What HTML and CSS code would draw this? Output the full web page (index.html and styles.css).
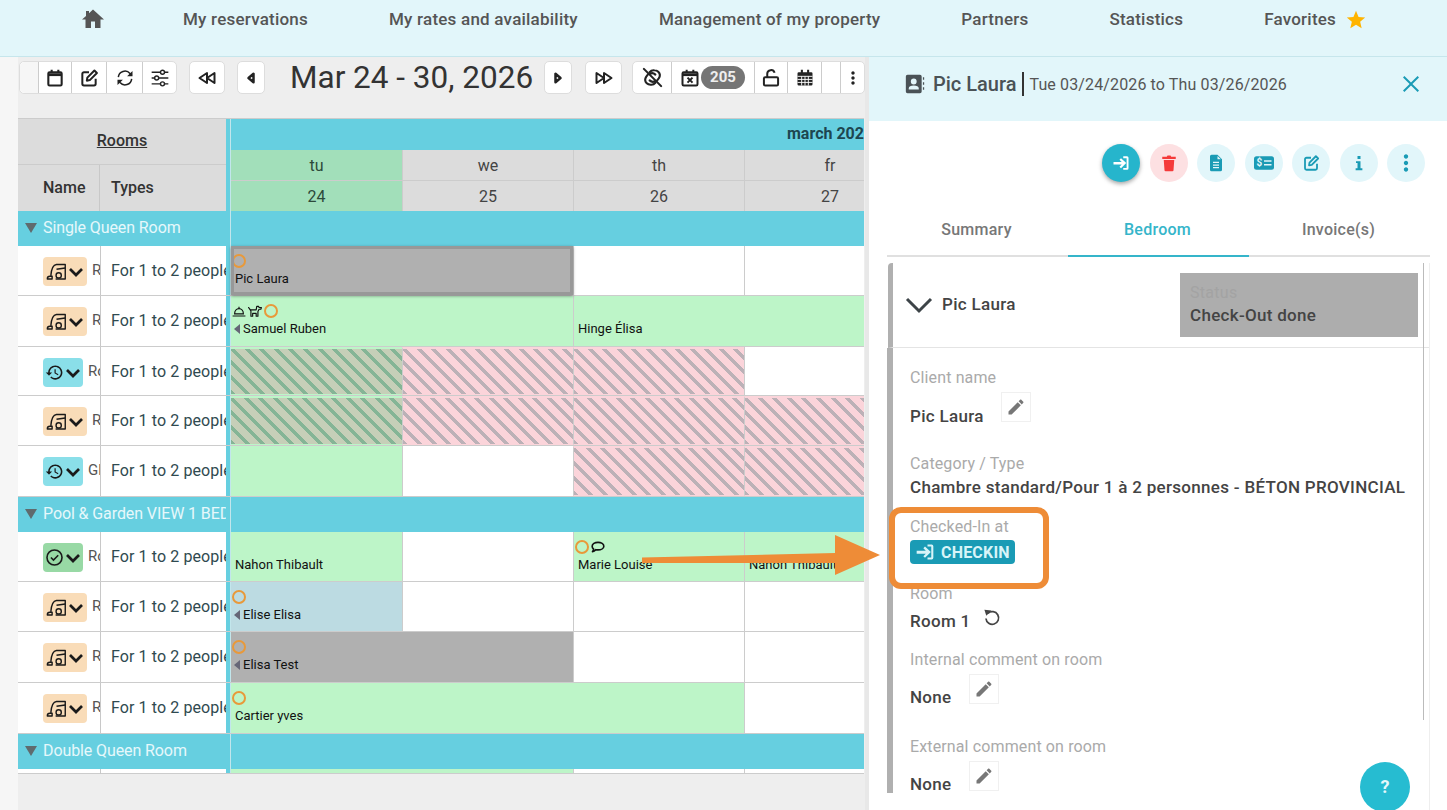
FILE: index.html
```html
<!DOCTYPE html>
<html>
<head>
  <title>Reservations planning</title>
  <link rel="stylesheet" href="styles.css">
</head>
<body>
  <svg class="icon-defs" xmlns="http://www.w3.org/2000/svg">
    <symbol id="i-home" viewBox="0 0 24 24"><path fill="currentColor" d="M10 21v-6.5h4V21h5.5v-8.5H23L12 2.5 8 6.200V4H5v4.900L1 12.500h3.500V21z"/></symbol>
    <symbol id="i-star" viewBox="0 0 24 24"><path fill="currentColor" d="M12 17.270L18.180 21l-1.640-7.030L22 9.240l-7.190-.61L12 2 9.190 8.630 2 9.240l5.460 4.730L5.820 21z"/></symbol>
    <symbol id="i-calendar" viewBox="0 0 24 24"><g fill="none" stroke="currentColor" stroke-width="2.500"><rect x="4" y="5" width="16" height="16" rx="1.500"/><path d="M8 2v4M16 2v4"/><path stroke-width="3.400" d="M4 8h16"/></g></symbol>
    <symbol id="i-edit" viewBox="0 0 24 24"><g fill="none" stroke="currentColor" stroke-width="2.400" stroke-linejoin="round"><path d="M12 5H6a2 2 0 0 0-2 2v12a2 2 0 0 0 2 2h12a2 2 0 0 0 2-2v-6"/><path d="M10 11.500L18.500 3l3 3-8.500 8.500-3.600.7z"/></g></symbol>
    <symbol id="i-sync" viewBox="0 0 24 24"><g fill="none" stroke="currentColor" stroke-width="1.800"><path d="M4 11a8 8 0 0 1 14-4.500L20 9"/><path d="M20 13a8 8 0 0 1-14 4.500L4 15"/></g><path fill="currentColor" d="M21 3.500V10h-6.500zM3 20.500V14h6.500z"/></symbol>
    <symbol id="i-sliders" viewBox="0 0 24 24"><g fill="none" stroke="currentColor" stroke-width="1.700"><path d="M2 5h20M2 12h20M2 19h20"/><circle cx="15" cy="5" r="2.400" fill="#fff"/><circle cx="8" cy="12" r="2.400" fill="#fff"/><circle cx="15" cy="19" r="2.400" fill="#fff"/></g></symbol>
    <symbol id="i-back2" viewBox="0 0 24 24"><g fill="none" stroke="currentColor" stroke-width="2.400" stroke-linejoin="round"><path d="M12 6v12L3 12z"/><path d="M21 6v12l-9-6z"/></g></symbol>
    <symbol id="i-fwd2" viewBox="0 0 24 24"><g fill="none" stroke="currentColor" stroke-width="2.400" stroke-linejoin="round"><path d="M3 6v12l9-6z"/><path d="M12 6v12l9-6z"/></g></symbol>
    <symbol id="i-back" viewBox="0 0 24 24"><path fill="none" stroke="currentColor" stroke-width="3" stroke-linejoin="round" d="M15 7v10l-6-5z"/></symbol>
    <symbol id="i-fwd" viewBox="0 0 24 24"><path fill="none" stroke="currentColor" stroke-width="3" stroke-linejoin="round" d="M9 7v10l6-5z"/></symbol>
    <symbol id="i-unlink" viewBox="0 0 24 24"><g fill="none" stroke="currentColor" stroke-width="2.200" stroke-linecap="round"><path d="M3 3l18 18"/><path d="M9 6.500A5.500 5.500 0 0 1 14 4.500c2 0 3 .5 4 1.500 1.500 1.500 2.500 4 .5 7l-2 2.500"/><path d="M15 17.500A5.500 5.500 0 0 1 10 19.500c-2 0-3-.5-4-1.500-1.500-1.500-2.500-4-.5-7l2-2.500"/><path d="M15 9a5 5 0 0 0-5.500-1M9 15a5 5 0 0 0 5.500 1"/></g></symbol>
    <symbol id="i-calx" viewBox="0 0 24 24"><g fill="none" stroke="currentColor" stroke-width="2.400"><rect x="3" y="5" width="18" height="16" rx="1.500"/><path d="M8 2v4M16 2v4"/><path stroke-width="3.400" d="M3 8h18"/><path d="M9 11.500l6 6M15 11.500l-6 6"/></g></symbol>
    <symbol id="i-unlock" viewBox="0 0 24 24"><g fill="none" stroke="currentColor" stroke-width="2.400"><rect x="3.500" y="11" width="17" height="10" rx="1.500"/><path d="M7.500 11V7a4.500 4.500 0 0 1 8.800-1.300"/></g></symbol>
    <symbol id="i-calgrid" viewBox="0 0 24 24"><path fill="currentColor" d="M7 2h2.500v3h5V2H17v3h2.500A1.500 1.500 0 0 1 21 6.500v13a1.500 1.500 0 0 1-1.500 1.500h-15A1.500 1.500 0 0 1 3 19.500v-13A1.500 1.500 0 0 1 4.500 5H7z"/><path fill="none" stroke="#fff" stroke-width="1.100" d="M3 10h18M3 13.700h18M3 17.300h18M8 10v11M12 10v11M16 10v11"/></symbol>
    <symbol id="i-dots" viewBox="0 0 24 24"><path fill="currentColor" d="M12 8c1.100 0 2-.9 2-2s-.9-2-2-2-2 .9-2 2 .9 2 2 2zm0 2c-1.100 0-2 .9-2 2s.9 2 2 2 2-.9 2-2-.9-2-2-2zm0 6c-1.100 0-2 .9-2 2s.9 2 2 2 2-.9 2-2-.9-2-2-2z"/></symbol>
    <symbol id="i-vacuum" viewBox="0 0 24 24"><g fill="none" stroke="currentColor" stroke-width="1.600" stroke-linejoin="round"><path d="M1.500 20.500c0-2 1.200-3 3-3h2.500v3z"/><path d="M5.500 17C6 10 7 4.500 12 4h10v16.500H11"/><path d="M12 9.500l10-1.500"/><circle cx="14.500" cy="16.500" r="3"/></g></symbol>
    <symbol id="i-history" viewBox="0 0 24 24"><path fill="currentColor" d="M13 3c-4.970 0-9 4.030-9 9H1l3.890 3.890.07.14L9 12H6c0-3.870 3.130-7 7-7s7 3.130 7 7-3.130 7-7 7c-1.930 0-3.680-.79-4.940-2.060l-1.420 1.420C8.270 19.990 10.510 21 13 21c4.970 0 9-4.030 9-9s-4.030-9-9-9zm-1 5v5l4.280 2.540.72-1.210-3.500-2.080V8H12z"/></symbol>
    <symbol id="i-check" viewBox="0 0 24 24"><g fill="none" stroke="currentColor" stroke-width="2"><circle cx="12" cy="12" r="9.500"/><path d="M7.500 12l3.200 3.200 6-6"/></g></symbol>
    <symbol id="i-chevron" viewBox="0 0 24 24"><path fill="none" stroke="currentColor" stroke-width="3.600" d="M4 8l8 8 8-8"/></symbol>
    <symbol id="i-bell" viewBox="0 0 24 24"><g fill="none" stroke="currentColor" stroke-width="2"><path d="M4.500 17c0-5 3.200-9 7.500-9s7.500 4 7.500 9z"/><path d="M1 20.500h22M12 8V4.500"/></g></symbol>
    <symbol id="i-dog" viewBox="0 0 24 24"><g fill="none" stroke="currentColor" stroke-width="2" stroke-linejoin="round"><path d="M1 6l3 4h10l1-6h3l1 2h4l-1 3h-3l-2 4v8h-3v-5H8v5H5v-9z"/></g></symbol>
    <symbol id="i-comment" viewBox="0 0 24 24"><path fill="none" stroke="currentColor" stroke-width="2.800" stroke-linejoin="round" d="M12 4c5.500 0 10 2.800 10 6.500S17.500 17 12 17c-1.300 0-2.500-.2-3.600-.4C7 18 5 19.500 2.500 20c1.200-1.400 1.900-3 2-4.500C3 14.200 2 12.500 2 10.500 2 6.800 6.500 4 12 4z"/></symbol>
    <symbol id="i-contact" viewBox="0 0 24 24"><path fill="currentColor" fill-rule="evenodd" d="M3 1h15a2 2 0 0 1 2 2v18a2 2 0 0 1-2 2H3a2 2 0 0 1-2-2V3a2 2 0 0 1 2-2zm7.500 4.500a3.500 3.500 0 1 0 0 7 3.500 3.500 0 0 0 0-7zM4.500 18.500h12v-1.500c0-2-2.500-3.300-6-3.300s-6 1.300-6 3.300z"/><path fill="currentColor" d="M21.500 4H23v3h-1.500zM21.500 10H23v3h-1.500zM21.500 16H23v3h-1.500z"/></symbol>
    <symbol id="i-close" viewBox="0 0 24 24"><path fill="currentColor" d="M20 5.400L18.600 4 12 10.600 5.400 4 4 5.400 10.600 12 4 18.600 5.400 20 12 13.400 18.600 20 20 18.600 13.400 12z"/></symbol>
    <symbol id="i-login" viewBox="0 0 24 24"><path fill="currentColor" d="M12 5.500l-2 2 3 3H2v3.500h11l-3 3 2 2 7-7zM15 3v2.500h4.500v13H15V21h5a2 2 0 0 0 2-2V5a2 2 0 0 0-2-2z"/></symbol>
    <symbol id="i-trash" viewBox="0 0 24 24"><path fill="currentColor" d="M5 8h14l-1 13.500a1.500 1.500 0 0 1-1.500 1.500h-9A1.500 1.500 0 0 1 6 21.500zM3 3.500h6l1-1.500h4l1 1.500h6v3H3z"/></symbol>
    <symbol id="i-doc" viewBox="0 0 24 24"><path fill="currentColor" d="M14 1H6a2 2 0 0 0-2 2v18a2 2 0 0 0 2 2h12a2 2 0 0 0 2-2V7l-6-6zm2 18H8v-1.600h8zm0-3.500H8v-1.600h8zm0-3.500H8v-1.600h8zM14 7V2.500L18.500 7z"/></symbol>
    <symbol id="i-pencil" viewBox="0 0 24 24"><path fill="currentColor" d="M3 17.250V21h3.750L17.810 9.940l-3.750-3.750L3 17.250zM20.710 7.040c.39-.39.39-1.020 0-1.410l-2.340-2.340c-.39-.39-1.020-.39-1.410 0l-1.830 1.830 3.750 3.750 1.830-1.830z"/></symbol>
    <symbol id="i-undo" viewBox="0 0 24 24"><g fill="none" stroke="currentColor" stroke-width="2.200"><path d="M7.500 8A8 8 0 1 1 5 14.500"/></g><path fill="currentColor" d="M3 3.500l9 1-6.500 6.500z"/></symbol>
  </svg>

  <nav class="topnav">
    <a class="nav-home"><svg class="nav-home-icon"><use href="#i-home"/></svg></a>
    <a>My reservations</a>
    <a>My rates and availability</a>
    <a>Management of my property</a>
    <a>Partners</a>
    <a>Statistics</a>
    <a class="nav-fav">Favorites <svg class="nav-star"><use href="#i-star"/></svg></a>
  </nav>

  <div class="main">
    <section class="planning">
      <div class="toolbar">
        <div class="btn-group">
          <span class="seg seg-blank"></span>
          <span class="seg seg-33"><svg class="tool-icon"><use href="#i-calendar"/></svg></span>
          <span class="seg seg-35"><svg class="tool-icon"><use href="#i-edit"/></svg></span>
          <span class="seg seg-36"><svg class="tool-icon"><use href="#i-sync"/></svg></span>
          <span class="seg seg-34"><svg class="tool-icon"><use href="#i-sliders"/></svg></span>
        </div>
        <span class="tool-btn tool-btn-wide"><svg class="tool-icon"><use href="#i-back2"/></svg></span>
        <span class="tool-btn"><svg class="tool-icon"><use href="#i-back"/></svg></span>
        <h1 class="range-title">Mar 24 - 30, 2026</h1>
        <span class="tool-btn"><svg class="tool-icon"><use href="#i-fwd"/></svg></span>
        <span class="tool-btn tool-btn-next"><svg class="tool-icon"><use href="#i-fwd2"/></svg></span>
        <div class="btn-group btn-group-right">
          <span class="seg seg-38"><svg class="tool-icon tool-icon-big"><use href="#i-unlink"/></svg></span>
          <span class="seg seg-83"><svg class="tool-icon"><use href="#i-calx"/></svg><b class="count-badge">205</b></span>
          <span class="seg seg-33"><svg class="tool-icon"><use href="#i-unlock"/></svg></span>
          <span class="seg seg-34"><svg class="tool-icon"><use href="#i-calgrid"/></svg></span>
          <span class="seg seg-blank"></span>
          <span class="seg seg-24"><svg class="tool-icon"><use href="#i-dots"/></svg></span>
        </div>
      </div>

      <div class="board">
        <div class="board-head">
          <div class="head-rooms">
            <div class="head-title">Rooms</div>
            <div class="head-cols">
              <div class="col-name-head">Name</div>
              <div class="col-type-head">Types</div>
            </div>
          </div>
          <div class="divider"></div>
          <div class="head-days">
            <div class="month-bar">march 2026</div>
            <div class="day-row">
              <span class="day day-today">tu</span><span class="day">we</span><span class="day">th</span><span class="day">fr</span>
            </div>
            <div class="day-row">
              <span class="day day-today">24</span><span class="day">25</span><span class="day">26</span><span class="day">27</span>
            </div>
          </div>
        </div>

        <div class="cat-row">
          <div class="cat-name"><i class="cat-arrow"></i>Single Queen Room</div>
          <div class="divider"></div>
          <div class="cat-fill"></div>
        </div>

        <div class="row">
          <div class="cell-name"><span class="pill pill-clean"><svg class="pill-icon"><use href="#i-vacuum"/></svg><svg class="pill-chev"><use href="#i-chevron"/></svg></span>Room 1</div>
          <div class="cell-type">For 1 to 2 people</div>
          <div class="divider"></div>
          <div class="slots">
            <div class="slot span-2 booking bk-gray bk-selected"><div class="bk-icons"><i class="ring"></i></div><div class="bk-name">Pic Laura</div></div>
            <div class="slot"></div>
            <div class="slot"></div>
          </div>
        </div>

        <div class="row row-51">
          <div class="cell-name"><span class="pill pill-clean"><svg class="pill-icon"><use href="#i-vacuum"/></svg><svg class="pill-chev"><use href="#i-chevron"/></svg></span>Room 2</div>
          <div class="cell-type">For 1 to 2 people</div>
          <div class="divider"></div>
          <div class="slots">
            <div class="slot span-2 booking bk-green"><div class="bk-icons"><svg class="bk-icon"><use href="#i-bell"/></svg><svg class="bk-icon"><use href="#i-dog"/></svg><i class="ring"></i></div><div class="bk-name"><i class="bk-tri"></i>Samuel Ruben</div></div>
            <div class="slot span-2 booking bk-green"><div class="bk-icons"></div><div class="bk-name">Hinge Élisa</div></div>
          </div>
        </div>

        <div class="row row-49">
          <div class="cell-name"><span class="pill pill-late"><svg class="pill-icon pill-icon-late"><use href="#i-history"/></svg><svg class="pill-chev"><use href="#i-chevron"/></svg></span>Room 3</div>
          <div class="cell-type">For 1 to 2 people</div>
          <div class="divider"></div>
          <div class="slots">
            <div class="slot stripe-green"></div>
            <div class="slot stripe-pink"></div>
            <div class="slot stripe-pink"></div>
            <div class="slot"></div>
          </div>
        </div>

        <div class="row">
          <div class="cell-name"><span class="pill pill-clean"><svg class="pill-icon"><use href="#i-vacuum"/></svg><svg class="pill-chev"><use href="#i-chevron"/></svg></span>Room 4</div>
          <div class="cell-type">For 1 to 2 people</div>
          <div class="divider"></div>
          <div class="slots">
            <div class="slot stripe-green"></div>
            <div class="slot stripe-pink"></div>
            <div class="slot stripe-pink"></div>
            <div class="slot stripe-pink"></div>
          </div>
        </div>

        <div class="row row-51">
          <div class="cell-name"><span class="pill pill-late"><svg class="pill-icon pill-icon-late"><use href="#i-history"/></svg><svg class="pill-chev"><use href="#i-chevron"/></svg></span>Glycine</div>
          <div class="cell-type">For 1 to 2 people</div>
          <div class="divider"></div>
          <div class="slots">
            <div class="slot bk-green"></div>
            <div class="slot"></div>
            <div class="slot stripe-pink"></div>
            <div class="slot stripe-pink"></div>
          </div>
        </div>

        <div class="cat-row">
          <div class="cat-name"><i class="cat-arrow"></i>Pool &amp; Garden VIEW 1 BEDROOM</div>
          <div class="divider"></div>
          <div class="cat-fill"></div>
        </div>

        <div class="row">
          <div class="cell-name"><span class="pill pill-ok"><svg class="pill-icon pill-icon-late"><use href="#i-check"/></svg><svg class="pill-chev"><use href="#i-chevron"/></svg></span>Room 5</div>
          <div class="cell-type">For 1 to 2 people</div>
          <div class="divider"></div>
          <div class="slots">
            <div class="slot booking bk-green"><div class="bk-icons"></div><div class="bk-name">Nahon Thibault</div></div>
            <div class="slot"></div>
            <div class="slot booking bk-green"><div class="bk-icons"><i class="ring"></i><svg class="bk-icon"><use href="#i-comment"/></svg></div><div class="bk-name">Marie Louise</div></div>
            <div class="slot booking bk-green"><div class="bk-icons"></div><div class="bk-name">Nahon Thibault</div></div>
          </div>
        </div>

        <div class="row">
          <div class="cell-name"><span class="pill pill-clean"><svg class="pill-icon"><use href="#i-vacuum"/></svg><svg class="pill-chev"><use href="#i-chevron"/></svg></span>Room 6</div>
          <div class="cell-type">For 1 to 2 people</div>
          <div class="divider"></div>
          <div class="slots">
            <div class="slot booking bk-blue"><div class="bk-icons"><i class="ring"></i></div><div class="bk-name"><i class="bk-tri"></i>Elise Elisa</div></div>
            <div class="slot"></div>
            <div class="slot"></div>
            <div class="slot"></div>
          </div>
        </div>

        <div class="row row-51">
          <div class="cell-name"><span class="pill pill-clean"><svg class="pill-icon"><use href="#i-vacuum"/></svg><svg class="pill-chev"><use href="#i-chevron"/></svg></span>Room 7</div>
          <div class="cell-type">For 1 to 2 people</div>
          <div class="divider"></div>
          <div class="slots">
            <div class="slot span-2 booking bk-gray"><div class="bk-icons"><i class="ring"></i></div><div class="bk-name"><i class="bk-tri"></i>Elisa Test</div></div>
            <div class="slot"></div>
            <div class="slot"></div>
          </div>
        </div>

        <div class="row row-51">
          <div class="cell-name"><span class="pill pill-clean"><svg class="pill-icon"><use href="#i-vacuum"/></svg><svg class="pill-chev"><use href="#i-chevron"/></svg></span>Room 8</div>
          <div class="cell-type">For 1 to 2 people</div>
          <div class="divider"></div>
          <div class="slots">
            <div class="slot span-3 booking bk-green"><div class="bk-icons"><i class="ring"></i></div><div class="bk-name">Cartier yves</div></div>
            <div class="slot"></div>
          </div>
        </div>

        <div class="cat-row">
          <div class="cat-name"><i class="cat-arrow"></i>Double Queen Room</div>
          <div class="divider"></div>
          <div class="cat-fill"></div>
        </div>

        <div class="row row-last">
          <div class="cell-name"></div>
          <div class="cell-type"></div>
          <div class="divider"></div>
          <div class="slots">
            <div class="slot span-2 bk-green"></div>
            <div class="slot"></div>
            <div class="slot"></div>
          </div>
        </div>
      </div>
    </section>

    <aside class="detail">
      <header class="detail-head">
        <svg class="detail-contact"><use href="#i-contact"/></svg>
        <span class="detail-name">Pic Laura</span>
        <span class="detail-dates">Tue 03/24/2026 to Thu 03/26/2026</span>
        <svg class="detail-close"><use href="#i-close"/></svg>
      </header>

      <div class="actions">
        <span class="action action-main"><svg class="action-icon"><use href="#i-login"/></svg></span>
        <span class="action action-danger"><svg class="action-icon"><use href="#i-trash"/></svg></span>
        <span class="action"><svg class="action-icon"><use href="#i-doc"/></svg></span>
        <span class="action"><svg class="action-icon action-card" viewBox="0 0 24 16"><rect width="24" height="16" rx="3" fill="currentColor"/><path d="M12 5.500h9M12 10h9" stroke="#e2f6fa" stroke-width="1.800"/><text x="3" y="12" class="action-dollar">$</text></svg></span>
        <span class="action"><svg class="action-icon"><use href="#i-edit"/></svg></span>
        <span class="action"><svg class="action-icon" viewBox="0 0 24 24"><path fill="currentColor" d="M10 2.500h4v4h-4zM8 9.500h6V19h2.500v2.500h-9V19H10v-7H8z"/></svg></span>
        <span class="action"><svg class="action-icon action-dots"><use href="#i-dots"/></svg></span>
      </div>

      <div class="tabs">
        <span class="tab">Summary</span>
        <span class="tab tab-active">Bedroom</span>
        <span class="tab">Invoice(s)</span>
      </div>

      <div class="card">
        <div class="card-head">
          <svg class="card-chevron" viewBox="0 0 28 18"><path fill="none" stroke="currentColor" stroke-width="3" d="M2 3l12 12L26 3"/></svg>
          <span class="card-title">Pic Laura</span>
          <div class="status-box">
            <span class="status-label">Status</span>
            <span class="status-value">Check-Out done</span>
          </div>
        </div>
        <div class="card-body">
          <div class="field field-client">
            <div class="field-label">Client name</div>
            <div class="value-row">
              <span class="field-value">Pic Laura</span>
              <span class="edit-btn edit-btn-client"><svg class="edit-icon"><use href="#i-pencil"/></svg></span>
            </div>
          </div>
          <div class="field field-category">
            <div class="field-label">Category / Type</div>
            <div class="field-value">Chambre standard/Pour 1 à 2 personnes - BÉTON PROVINCIAL</div>
          </div>
          <div class="field field-checkin">
            <div class="field-label">Checked-In at</div>
            <span class="checkin-btn"><svg class="checkin-icon"><use href="#i-login"/></svg>CHECKIN</span>
          </div>
          <div class="field">
            <div class="field-label">Room</div>
            <div class="room-value">
              <span class="field-value">Room 1</span>
              <svg class="undo-icon"><use href="#i-undo"/></svg>
            </div>
          </div>
          <div class="field field-edit">
            <div class="field-label">Internal comment on room</div>
            <div class="value-row">
              <span class="field-value">None</span>
              <span class="edit-btn"><svg class="edit-icon"><use href="#i-pencil"/></svg></span>
            </div>
          </div>
          <div class="field field-edit">
            <div class="field-label">External comment on room</div>
            <div class="value-row">
              <span class="field-value">None</span>
              <span class="edit-btn"><svg class="edit-icon"><use href="#i-pencil"/></svg></span>
            </div>
          </div>
        </div>
      </div>
    </aside>
  </div>

  <div class="help-btn">?</div>

  <div class="callout-box"></div>
  <svg class="callout-arrow" viewBox="0 0 240 42">
    <path fill="#ee8c37" d="M0 22.500L193 18V0l45 20-45 20V28L0 28z"/>
  </svg>
</body>
</html>
```

FILE: styles.css
```css
* {
  box-sizing: border-box;
  margin: 0;
  padding: 0;
}

body {
  font-family: Roboto, Arial, sans-serif;
  background-color: #f6f6f6;
  color: #444;
  width: 1447px;
  height: 810px;
  overflow: hidden;
  position: relative;
}

.icon-defs {
  display: none;
}

/* top menu */
.topnav {
  height: 57px;
  display: flex;
  gap: 81px;
  padding: 9px 0 0 82px;
  background-color: #e2f6fa;
  border-bottom: 1px solid #c6e6ec;
  color: #555;
  font-size: 17px;
  font-weight: 500;
  letter-spacing: 0.22px;
  line-height: 20px;
  white-space: nowrap;
}

.nav-home {
  width: 20px;
  height: 20px;
}

.nav-home-icon {
  width: 24px;
  height: 24px;
  margin: -2px 0 0 -1px;
  color: #555;
}

.nav-fav {
  display: flex;
  gap: 9px;
}

.nav-star {
  width: 22px;
  height: 22px;
  color: #ffb400;
}

.main {
  display: flex;
  height: 753px;
}

/* planning side */
.planning {
  width: 865px;
  padding-left: 18px;
  flex-shrink: 0;
  background: linear-gradient(#eee, #eee) no-repeat 18px 0 / 847px 100%;
}

.toolbar {
  height: 61px;
  display: flex;
  align-items: flex-start;
  gap: 12px;
  padding-top: 4px;
  padding-left: 1px;
}

.btn-group {
  display: flex;
  height: 33px;
  background-color: #fff;
  border: 1px solid #ddd;
  border-radius: 5px;
}

.btn-group-right {
  margin-left: -2px;
}

.seg {
  display: flex;
  align-items: center;
  justify-content: center;
  border-left: 1px solid #ccc;
  color: #222;
}

.seg:first-child {
  border-left: none;
}

.seg-blank {
  width: 18px;
  background-color: #f6f6f6;
  border-radius: 5px 0 0 5px;
}

.btn-group-right .seg-blank {
  width: 19px;
  background-color: #fff;
  border-radius: 0;
}

.seg-24 { width: 24px; }
.seg-33 { width: 33px; }
.seg-34 { width: 34px; }
.seg-35 { width: 35px; }
.seg-36 { width: 36px; }
.seg-38 { width: 38px; }

.seg-83 {
  width: 83px;
  gap: 1px;
  justify-content: flex-start;
  padding-left: 8px;
}

.tool-btn {
  width: 28px;
  height: 33px;
  display: flex;
  align-items: center;
  justify-content: center;
  background-color: #fff;
  border: 1px solid #ddd;
  border-radius: 5px;
  color: #222;
}

.tool-btn-wide {
  width: 36px;
}

.tool-btn-next {
  width: 37px;
  margin-left: 1px;
}

.tool-icon {
  width: 20px;
  height: 20px;
  flex-shrink: 0;
}

.tool-icon-big {
  width: 23px;
  height: 23px;
}

.count-badge {
  width: 44px;
  height: 23px;
  background-color: #757575;
  color: #eee;
  border-radius: 12px;
  font-size: 15px;
  font-weight: 700;
  line-height: 23px;
  text-align: center;
}

.range-title {
  width: 242px;
  margin: 0 0 0 13px;
  color: #333;
  font-size: 31.500px;
  font-weight: 400;
  line-height: 33px;
  white-space: nowrap;
}

/* board */
.board {
  width: 846px;
  border-top: 1px solid #ccc;
  overflow: hidden;
}

.board-head {
  display: flex;
  height: 92px;
}

.head-rooms {
  width: 208px;
  background-color: #dcdcdc;
  flex-shrink: 0;
}

.head-title {
  height: 46px;
  line-height: 44px;
  text-align: center;
  text-decoration: underline;
  font-size: 16px;
  font-weight: 500;
  color: #333;
  border-bottom: 1px solid #ccc;
}

.head-cols {
  display: flex;
  height: 46px;
  line-height: 46px;
  font-size: 16px;
  font-weight: 500;
  color: #333;
}

.col-name-head {
  width: 82px;
  padding-left: 25px;
  border-right: 1px solid #c8c8c8;
}

.col-type-head {
  padding-left: 11px;
}

.divider {
  width: 5px;
  flex-shrink: 0;
  background-color: #66cfe0;
  border-right: 1px solid #c2e6ec;
}

.head-days {
  flex: 1;
}

.month-bar {
  height: 31px;
  padding-left: 556px;
  background-color: #66cfe0;
  color: #1d4650;
  font-size: 16px;
  font-weight: 700;
  line-height: 30px;
  white-space: nowrap;
  overflow: hidden;
}

.day-row {
  display: flex;
  width: 684px;
  height: 31px;
  line-height: 31px;
  font-size: 16px;
  color: #444;
  background-color: #dcdcdc;
  border-bottom: 1px solid #ccc;
}

.day-row:last-child {
  height: 30px;
  border-bottom: none;
}

.day {
  width: 171px;
  text-align: center;
  border-left: 1px solid #ccc;
}

.day-today {
  background-color: #a2dfba;
  border-left: none;
  color: #2d4a3a;
}

.cat-row {
  display: flex;
  height: 35px;
  background-color: #66cfe0;
}

.cat-name {
  width: 208px;
  flex-shrink: 0;
  padding-left: 7px;
  color: #e6f8fb;
  font-size: 16px;
  letter-spacing: -0.1px;
  line-height: 33px;
  white-space: nowrap;
  overflow: hidden;
}

.cat-arrow {
  display: inline-block;
  width: 0;
  height: 0;
  margin-right: 6px;
  border-left: 6px solid transparent;
  border-right: 6px solid transparent;
  border-top: 10px solid #5f6b6e;
}

.cat-fill {
  flex: 1;
}

.row {
  display: flex;
  height: 50px;
  background-color: #fff;
  border-bottom: 1px solid #ccc;
}

.row-49 { height: 49px; }
.row-51 { height: 51px; }

.row-last {
  height: 5px;
}

.cell-name {
  width: 83px;
  flex-shrink: 0;
  display: flex;
  align-items: flex-start;
  gap: 5px;
  padding: 11px 0 0 25px;
  color: #555;
  font-size: 15px;
  line-height: 27px;
  white-space: nowrap;
  overflow: hidden;
  border-right: 1px solid #c8c8c8;
}

.cell-type {
  width: 125px;
  flex-shrink: 0;
  padding-left: 10px;
  color: #2f4a50;
  font-size: 16px;
  letter-spacing: 0.1px;
  line-height: 50px;
  white-space: nowrap;
  overflow: hidden;
}

.pill {
  height: 29px;
  flex-shrink: 0;
  display: flex;
  align-items: center;
  justify-content: center;
  border-radius: 4px;
  color: #1a1a1a;
}

.pill-clean {
  width: 44px;
  background-color: #f9dcb8;
}

.pill-late {
  width: 40px;
  background-color: #8adfe9;
}

.pill-ok {
  width: 40px;
  background-color: #98d9a5;
}

.pill-icon {
  width: 21px;
  height: 21px;
}

.pill-icon-late {
  width: 19px;
  height: 19px;
}

.pill-chev {
  width: 18px;
  height: 18px;
}

.slots {
  display: grid;
  grid-template-columns: repeat(4, 171px);
  flex-shrink: 0;
}

.slot {
  border-left: 1px solid #ccc;
  min-width: 0;
}

.slot:first-child {
  border-left: none;
}

.span-2 { grid-column: span 2; }
.span-3 { grid-column: span 3; }

.booking {
  display: flex;
  flex-direction: column;
  gap: 3px;
  padding: 8px 4px 0;
  color: #111;
  font-size: 13px;
  line-height: 15px;
  white-space: nowrap;
  overflow: hidden;
}

.bk-green { background-color: #bdf5c8; }
.bk-blue { background-color: #bcdbe2; }
.bk-gray { background-color: #b0b0b0; }

.slot.bk-selected {
  border: 3px solid #989898;
  padding: 5px 1px 0;
  box-shadow: 0 1px 3px rgba(0, 0, 0, 0.4);
  position: relative;
}

.bk-icons {
  display: flex;
  align-items: center;
  gap: 2px;
  height: 14px;
  margin-left: -3px;
}

.bk-icon {
  width: 14px;
  height: 14px;
  color: #111;
}

.ring {
  width: 14px;
  height: 14px;
  border: 2px solid #e8993a;
  border-radius: 50%;
  flex-shrink: 0;
}

.bk-name {
  display: flex;
  align-items: center;
}

.bk-tri {
  width: 0;
  height: 0;
  margin: 0 3px 0 -1px;
  border-top: 5px solid transparent;
  border-bottom: 5px solid transparent;
  border-right: 6px solid #667;
}

.stripe-green {
  background: repeating-linear-gradient(45deg, #85b596 0 3.500px, #c6cfb8 3.500px 10.300px);
  border-top: 2px solid #bdf5c8;
  border-bottom: 1px solid #bdf5c8;
}

.stripe-pink {
  background: repeating-linear-gradient(45deg, #bcb1b7 0 3.500px, #fbd4da 3.500px 10.300px);
  border-top: 2px solid #fbd4da;
  border-bottom: 1px solid #fbd4da;
}

/* detail side */
.detail {
  flex: 1;
  background-color: #fff;
  border-left: 4px solid #e8e8e8;
  overflow: hidden;
}

.detail-head {
  height: 64px;
  display: flex;
  align-items: center;
  padding: 0 24px 10px 36px;
  background-color: #e2f6fa;
  color: #555;
}

.detail-contact {
  width: 20px;
  height: 20px;
  margin-right: 8px;
  color: #4a5256;
}

.detail-name {
  padding-right: 6px;
  border-right: 2px solid #333;
  font-size: 20px;
  font-weight: 500;
  line-height: 24px;
  color: #4a5256;
}

.detail-dates {
  margin-left: 5px;
  flex: 1;
  font-size: 16px;
  letter-spacing: 0.13px;
}

.detail-close {
  width: 24px;
  height: 24px;
  color: #1a9bb5;
}

.actions {
  display: flex;
  justify-content: flex-end;
  gap: 9.500px;
  margin-top: 23px;
  padding-right: 22px;
}

.action {
  width: 38px;
  height: 38px;
  display: flex;
  align-items: center;
  justify-content: center;
  background-color: #e2f6fa;
  border-radius: 50%;
  color: #1a9bb5;
}

.action-main {
  background-color: #26b5cc;
  color: #fff;
  box-shadow: 0 2px 4px rgba(0, 0, 0, 0.35);
}

.action-danger {
  background-color: #fde0e2;
  color: #f53a3a;
}

.action-icon {
  width: 18px;
  height: 18px;
}

.action-card {
  width: 20px;
  height: 14px;
}

.action-dots {
  width: 26px;
  height: 26px;
}

.action-dollar {
  fill: #e2f6fa;
  font-size: 12px;
  font-weight: 700;
}

.tabs {
  display: flex;
  width: 543px;
  height: 46px;
  margin: 29px 0 0 18px;
  border-bottom: 2px solid #e0e0e0;
  font-size: 16px;
  font-weight: 500;
  letter-spacing: 0.25px;
  color: #777;
}

.tab {
  flex: 1;
  height: 46px;
  padding-right: 2px;
  line-height: 37px;
  text-align: center;
}

.tab-active {
  color: #35b5ca;
  border-bottom: 2px solid #35b5ca;
}

.card {
  position: relative;
  width: 543px;
  height: 560px;
  margin: 6px 0 0 18px;
  border-right: 1px solid #eee;
}

.card::after {
  content: "";
  position: absolute;
  top: 0;
  right: 5px;
  width: 1px;
  height: 457px;
  background-color: #bbb;
}

.card-head {
  display: flex;
  align-items: center;
  height: 85px;
  margin-left: 1px;
  padding: 0 11px 0 12px;
  border-left: 5px solid #b0b0b0;
  border-top-left-radius: 4px;
  border-bottom: 1px solid #e4e4e4;
  font-size: 17px;
  font-weight: 500;
  letter-spacing: 0.3px;
}

.card-chevron {
  width: 28px;
  height: 18px;
  margin-right: 9px;
  color: #3d4448;
}

.card-title {
  flex: 1;
  padding-bottom: 2px;
}

.status-box {
  width: 238px;
  height: 64px;
  display: flex;
  flex-direction: column;
  justify-content: center;
  padding-left: 10px;
  background-color: #adadad;
}

.status-label {
  color: #a3a3a3;
  font-size: 16px;
  font-weight: 400;
  line-height: 20px;
}

.status-value {
  color: #444;
  line-height: 24px;
}

.card-body {
  padding: 20px 0 0 17px;
  border-left: 6px solid #b0b0b0;
}

.field {
  margin-bottom: 20px;
}

.field-client {
  margin-bottom: 29px;
}

.field-edit {
  margin-bottom: 31px;
}

.field-category {
  margin-bottom: 21px;
}

.field-checkin {
  margin-bottom: 18px;
}

.field-label {
  margin-bottom: 4px;
  color: #aaa;
  font-size: 16px;
  letter-spacing: 0.13px;
  line-height: 20px;
}

.field-value {
  color: #444;
  font-size: 17px;
  font-weight: 500;
  letter-spacing: 0.3px;
  line-height: 18px;
  white-space: nowrap;
}

.value-row {
  display: flex;
  align-items: flex-end;
  gap: 18px;
}

.edit-btn {
  width: 30px;
  height: 30px;
  display: flex;
  align-items: center;
  justify-content: center;
  margin-bottom: 2px;
  border: 1px solid #f0f0f0;
  color: #777;
}

.edit-btn-client {
  margin-bottom: 3px;
  margin-left: -1px;
}

.edit-icon {
  width: 20px;
  height: 20px;
}

.field-checkin .field-label {
  margin-bottom: 3px;
}

.checkin-btn {
  display: inline-flex;
  align-items: center;
  gap: 6px;
  width: 105px;
  height: 24px;
  padding-left: 5px;
  background-color: #1a9bb5;
  border-radius: 4px;
  color: #d8f4f8;
  font-size: 16px;
  font-weight: 700;
  letter-spacing: 0.2px;
}

.checkin-icon {
  width: 20px;
  height: 20px;
}

.room-value {
  display: flex;
  align-items: flex-end;
  gap: 11px;
  margin-top: -1px;
}

.undo-icon {
  width: 19px;
  height: 19px;
  margin-bottom: 4px;
  color: #444;
}

/* things lying over the page */
.help-btn {
  position: absolute;
  left: 1360px;
  top: 762px;
  width: 50px;
  height: 50px;
  background-color: #26bcd1;
  border-radius: 50%;
  color: #e6f8fb;
  font-size: 18px;
  font-weight: 700;
  line-height: 50px;
  text-align: center;
}

.callout-box {
  position: absolute;
  left: 889px;
  top: 507px;
  width: 160px;
  height: 82px;
  border: 6px solid #ee8c37;
  border-radius: 12px;
}

.callout-arrow {
  position: absolute;
  left: 642px;
  top: 535px;
  width: 240px;
  height: 42px;
}
```
